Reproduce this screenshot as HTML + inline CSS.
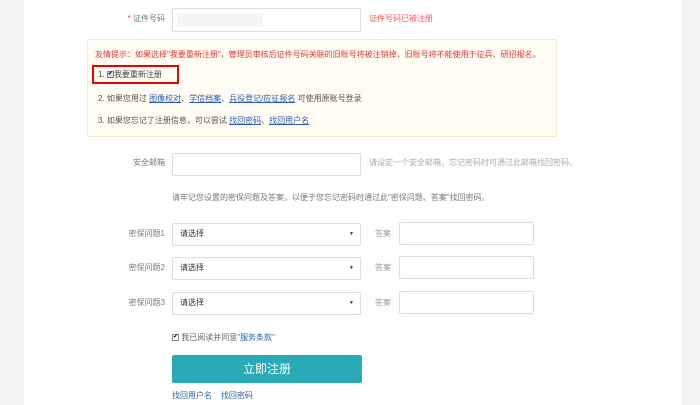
<!DOCTYPE html>
<html><head><meta charset="utf-8"><style>
*{margin:0;padding:0;box-sizing:border-box}
body{width:700px;height:405px;background:#f2f2f2;font-family:"Liberation Sans","Noto Sans CJK SC",sans-serif;font-size:8px;color:#666;position:relative;overflow:hidden}
.card{position:absolute;left:24px;top:0;width:658px;height:405px;background:#fff}
.a{position:absolute;white-space:nowrap;line-height:10px}
.in{position:absolute;border:1px solid #ddd;border-radius:2px;background:#fff}
.lbl{position:absolute;white-space:nowrap;line-height:10px;text-align:right;width:80px;color:#777}
a{color:#2a5db0;text-decoration:underline}
.sel{position:absolute;left:172px;width:189px;height:23px;border:1px solid #ddd;border-radius:2px;color:#333}
.sel span{position:absolute;left:7px;top:5px;line-height:10px}
.sel i{position:absolute;right:6px;top:7px;font-style:normal;font-size:5px;line-height:6px;color:#333}
.cb{display:inline-block;width:7px;height:7px;border:1px solid #789;font-size:6px;line-height:5px;color:#000;vertical-align:middle;text-align:center}
</style></head><body>
<div class="card"></div>
<div class="lbl" style="left:85px;top:14px"><span style="color:#e33">*</span> 证件号码</div>
<div class="in" style="left:172px;top:8px;width:189px;height:24px"><div style="position:absolute;left:4px;top:5px;width:86px;height:12px;background:#f4f4f4"></div></div>
<div class="a" style="left:369px;top:14px;color:#f55">证件号码已被注册</div>
<div style="position:absolute;left:87px;top:39px;width:470px;height:98px;background:#fffcf3;border:1px solid #f3ead2"></div>
<div class="a" style="left:95px;top:50px;color:#e33">友情提示：如果选择"我要重新注册"，管理员审核后证件号码关联的旧账号将被注销掉，旧账号将不能使用于征兵、研招报名。</div>
<div style="position:absolute;left:92px;top:65px;width:87px;height:19px;border:2px solid #e00"></div>
<div class="a" style="left:98px;top:70px;color:#444">1. <span class="cb" style="background:#cde">✔</span>我要重新注册</div>
<div class="a" style="left:98px;top:94px;color:#555">2. 如果您用过 <a>图像校对</a>、<a>学信档案</a>、<a>兵役登记/应征报名</a> 可使用原账号登录</div>
<div class="a" style="left:98px;top:116px;color:#555">3. 如果您忘记了注册信息，可以尝试 <a>找回密码</a>、<a>找回用户名</a></div>
<div class="lbl" style="left:85px;top:158px">安全邮箱</div>
<div class="in" style="left:172px;top:153px;width:189px;height:23px"></div>
<div class="a" style="left:369px;top:158px;color:#aaa">请设定一个安全邮箱，忘记密码时可通过此邮箱找回密码。</div>
<div class="a" style="left:172px;top:193px;color:#777">请牢记您设置的密保问题及答案，以便于您忘记密码时通过此"密保问题、答案"找回密码。</div>

<div class="lbl" style="left:85px;top:229px">密保问题1</div>
<div class="sel" style="top:223px"><span>请选择</span><i>▼</i></div>
<div class="a" style="left:375px;top:229px;color:#999">答案</div>
<div class="in" style="left:399px;top:222px;width:135px;height:23px"></div>

<div class="lbl" style="left:85px;top:263px">密保问题2</div>
<div class="sel" style="top:257px"><span>请选择</span><i>▼</i></div>
<div class="a" style="left:375px;top:263px;color:#999">答案</div>
<div class="in" style="left:399px;top:256px;width:135px;height:23px"></div>

<div class="lbl" style="left:85px;top:298px">密保问题3</div>
<div class="sel" style="top:292px"><span>请选择</span><i>▼</i></div>
<div class="a" style="left:375px;top:298px;color:#999">答案</div>
<div class="in" style="left:399px;top:291px;width:135px;height:23px"></div>

<div class="a" style="left:172px;top:333px;color:#666"><span class="cb" style="border-color:#888">✔</span> 我已阅读并同意"<span style="color:#2a5db0">服务条款</span>"</div>
<div style="position:absolute;left:172px;top:355px;width:190px;height:28px;background:#2aaab6;border-radius:2px;color:#fff;font-size:12px;line-height:28px;text-align:center">立即注册</div>
<div class="a" style="left:172px;top:391px;color:#2a5db0">找回用户名&nbsp;&nbsp;&nbsp;&nbsp;找回密码</div>
</body></html>
